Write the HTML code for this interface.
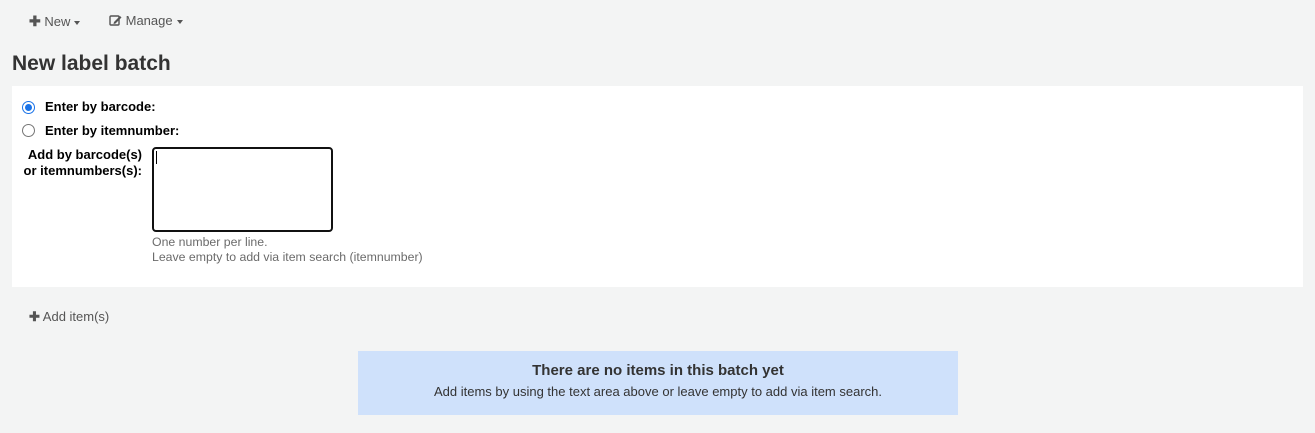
<!DOCTYPE html>
<html><head><style>
body{margin:0;width:1315px;height:433px;background:#f3f4f4;font-family:"Liberation Sans",sans-serif;color:#333;position:relative;overflow:hidden}
.a{position:absolute;white-space:nowrap}
.tb{font-size:13px;color:#555;top:13px}
.car{display:inline-block;border-left:3.5px solid transparent;border-right:3.5px solid transparent;border-top:4px solid #555;vertical-align:middle;margin-left:4px}
h1{position:absolute;left:12px;top:52px;margin:0;font-size:21px;font-weight:bold;color:#333}
.panel{position:absolute;left:12px;top:86px;width:1291px;height:201px;background:#fff}
.lbl{font-size:13px;font-weight:bold;color:#000}
.radio{position:absolute;width:11px;height:11px;border-radius:50%;border:1px solid #767676;background:#fff}
.hint{font-size:12.3px;color:#6b6b6b;line-height:15px}
.ta{position:absolute;left:152px;top:147px;width:177px;height:81px;border:2px solid #111;border-radius:4px;background:#fff}
.msg{position:absolute;left:358px;top:351px;width:600px;height:64px;background:#cfe1fb;text-align:center}
</style></head><body>
<div class="a tb" style="left:29px"><b style="font-size:14px">✚</b> New<span class="car"></span></div>
<div class="a tb" style="left:109px"><svg width="13" height="12" viewBox="0 0 13 12" style="vertical-align:-1px"><rect x="1" y="2" width="9" height="9" fill="none" stroke="#555" stroke-width="1.4" rx="1"/><path d="M5 8 L11 2 L12.5 3.5 L6.5 9.5 L4.5 10 Z" fill="#555"/></svg> Manage<span class="car"></span></div>
<h1>New label batch</h1>
<div class="panel"></div>
<div class="radio" style="left:22px;top:101px;border:1px solid #1a73e8"><div style="position:absolute;left:2px;top:2px;width:7px;height:7px;border-radius:50%;background:#1a73e8"></div></div>
<div class="a lbl" style="left:45px;top:99px">Enter by barcode:</div>
<div class="radio" style="left:22px;top:124px"></div>
<div class="a lbl" style="left:45px;top:123px">Enter by itemnumber:</div>
<div class="a lbl" style="left:22px;top:147px;text-align:right;width:120px;line-height:16px">Add by barcode(s)<br>or itemnumbers(s):</div>
<div class="ta"><div style="position:absolute;left:2px;top:2px;width:1px;height:13px;background:#000"></div></div>
<div class="a hint" style="left:152px;top:235px">One number per line.<br>Leave empty to add via item search (itemnumber)</div>
<div class="a" style="left:29px;top:309px;font-size:13px;color:#555"><b style="font-size:13px">✚</b> Add item(s)</div>
<div class="msg"><div style="font-size:15px;font-weight:bold;margin-top:11px;color:#333">There are no items in this batch yet</div><div style="font-size:13px;margin-top:5px;color:#333">Add items by using the text area above or leave empty to add via item search.</div></div>
</body></html>
